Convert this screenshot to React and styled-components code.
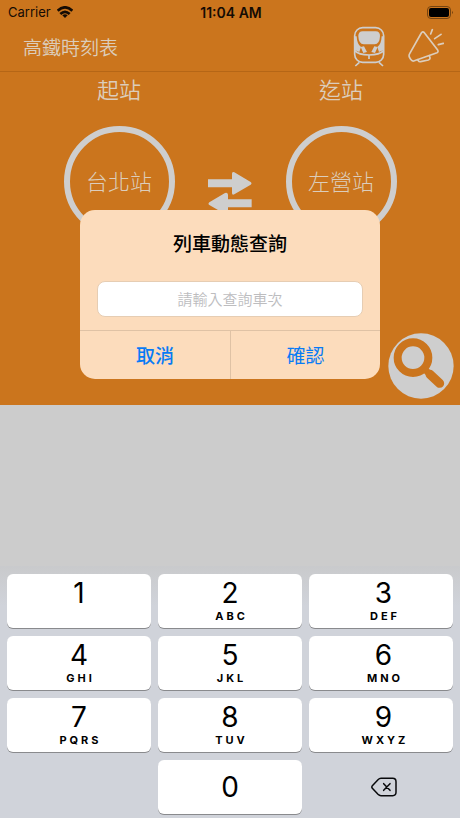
import React, { useState } from "react";
import styled, { createGlobalStyle } from "styled-components";

const ORANGE = "#cb751d";
const SILVER = "#cecece";

const GlobalStyle = createGlobalStyle`
  * { box-sizing: border-box; }
  body {
    margin: 0;
    background: #cccccc;
    font-family: Inter, "Noto Sans CJK TC", sans-serif;
  }
  button, input { font: inherit; color: inherit; }
  button { border: 0; padding: 0; background: none; cursor: pointer; }
  h1, h2 { margin: 0; }
`;

const Screen = styled.div`
  position: relative;
  min-height: 100vh;
  display: flex;
  flex-direction: column;
`;

const StatusBar = styled.div`
  display: grid;
  grid-template-columns: 1fr auto 1fr;
  align-items: center;
  height: 24px;
  padding: 0 6px 0 8px;
  background: ${ORANGE};
  color: #150c04;
  font-size: 13px;
`;

const Carrier = styled.span`
  display: flex;
  align-items: center;
  gap: 6px;
`;

const Clock = styled.time`
  font-size: 14px;
  font-weight: 600;
`;

const BatteryIcon = styled.svg`
  justify-self: end;
`;

const NavBar = styled.header`
  display: flex;
  align-items: center;
  justify-content: space-between;
  height: 48px;
  padding: 0 16px 0 23px;
  background: ${ORANGE};
  border-bottom: 1px solid #b56616;
  color: #dccdbb;
`;

const NavTitle = styled.h1`
  padding-top: 2px;
  font-size: 19px;
  line-height: 28px;
  font-weight: 350;
`;

const NavActions = styled.div`
  display: flex;
  align-items: center;
  gap: 22px;
  padding-bottom: 4px;
`;

const IconButton = styled.button`
  display: flex;
`;

const Journey = styled.main`
  display: flex;
  flex-direction: column;
  justify-content: space-between;
  height: 333px;
  background: ${ORANGE};
  color: #dccdbb;
`;

const Stations = styled.div`
  display: grid;
  grid-template-columns: 1fr 44px 1fr;
  padding: 0 30px;
`;

const Stop = styled.section`
  display: flex;
  flex-direction: column;
  align-items: center;
  gap: 18px;
`;

const StopLabel = styled.h2`
  font-size: 22px;
  line-height: 36px;
  font-weight: 350;
`;

const StationButton = styled.button`
  width: 111px;
  height: 111px;
  padding-bottom: 4px;
  border: 6px solid ${SILVER};
  border-radius: 50%;
  font-size: 22px;
  font-weight: 300;
`;

const SwapButton = styled.button`
  align-self: end;
  display: flex;
  margin-bottom: 22px;
`;

const SearchButton = styled.button`
  align-self: flex-end;
  display: flex;
  margin: 0 6px 6px 0;
`;

const Results = styled.div`
  flex: 1;
`;

const Keypad = styled.div`
  display: grid;
  grid-template-columns: repeat(3, 1fr);
  gap: 8px 7px;
  padding: 8px 7px 4px;
  background: linear-gradient(#c9cacc, #d0d3da 40px);
`;

const Key = styled.button`
  display: flex;
  flex-direction: column;
  align-items: center;
  justify-content: ${(p) => (p.$centered ? "center" : "flex-start")};
  height: 54px;
  padding-top: ${(p) => (p.$centered ? 0 : 2)}px;
  border-radius: 6px;
  background: #ffffff;
  box-shadow: 0 1px 0 #898a8d;
  color: #000000;
  &:nth-child(3n) { padding-left: 5px; }
`;

const Digit = styled.span`
  font-size: 28px;
  line-height: 34px;
  font-weight: 400;
`;

const Letters = styled.span`
  padding-left: 3px;
  font-size: 11px;
  line-height: 12px;
  font-weight: 700;
  letter-spacing: 3px;
`;

const ZeroKey = styled(Key)`
  grid-column: 2;
`;

const DeleteKey = styled.button`
  grid-column: 3;
  display: flex;
  align-items: center;
  justify-content: center;
  padding-left: 5px;
`;

const Overlay = styled.div`
  position: absolute;
  inset: 0;
  display: flex;
  align-items: flex-start;
  justify-content: center;
  padding-top: 210px;
  pointer-events: none;
`;

const Dialog = styled.form`
  width: 300px;
  overflow: hidden;
  border-radius: 15px;
  background: #fcdcbc;
  color: #000000;
  pointer-events: auto;
`;

const DialogBody = styled.div`
  display: flex;
  flex-direction: column;
  gap: 22px;
  padding: 21px 17px 13px;
`;

const DialogTitle = styled.h2`
  font-size: 19px;
  line-height: 28px;
  font-weight: 500;
  text-align: center;
`;

const TrainInput = styled.input`
  width: 100%;
  height: 36px;
  border: 1px solid #e6cdb3;
  border-radius: 8px;
  background: #ffffff;
  font-size: 15px;
  font-weight: 350;
  text-align: center;
  outline: none;
  &::placeholder { color: #bdbdbf; opacity: 1; }
`;

const DialogActions = styled.div`
  display: grid;
  grid-template-columns: 1fr 1fr;
  border-top: 1px solid #dfc2a5;
`;

const DialogButton = styled.button`
  height: 48px;
  padding-bottom: 2px;
  color: #087bf5;
  font-size: 19px;
  font-weight: ${(p) => (p.$strong ? 500 : 400)};
  & + & { border-left: 1px solid #dfc2a5; }
`;

const WifiIcon = () => (
  <svg width="16" height="12" viewBox="0 0 48 36" aria-hidden="true">
    <g fill="none" stroke="#150c04" strokeWidth="8">
      <path d="M2 14Q24 -6 46 14" />
      <path d="M10 24Q24 11 38 24" />
    </g>
    <path d="M16 28Q24 21 32 28L24 36Z" fill="#150c04" />
  </svg>
);

const TrainIcon = () => (
  <svg width="34" height="42" viewBox="0 0 102 126" aria-hidden="true">
    <rect x="8" y="8" width="87" height="104" rx="24" fill={ORANGE} stroke={SILVER} strokeWidth="5" />
    <path d="M8 34H14Q15 58 27 66L22 81L8 75ZM95 34H89Q88 58 76 66L81 81L95 75Z" fill={SILVER} />
    <path d="M32 19H71Q84 19 84 33Q83 57 68 58H35Q20 57 19 33Q19 19 32 19Z" fill={SILVER} />
    <path d="M26 66L36 64L45 81L34 84ZM77 66L67 64L58 81L69 84Z" fill={SILVER} />
    <path d="M8 77Q20 90 51 90Q83 90 95 77M51 92V102M22 112L10 123M81 112L93 123" fill="none" stroke={SILVER} strokeWidth="5" />
  </svg>
);

const MegaphoneIcon = () => (
  <svg width="36" height="36" viewBox="0 0 108 108" fill="none" stroke="#dccdbb" strokeWidth="5" strokeLinecap="round" strokeLinejoin="round" aria-hidden="true">
    <path d="M40 15Q44 9 49 14L89 66Q92 72 87 74L17 99Q12 100 8 94L4 87Q2 82 5 77Z" />
    <path d="M29 95L31 98Q33 102 38 101L61 96Q67 94 66 89L64 83M68 18L73 5M80 32L99 19M91 50L106 46" />
  </svg>
);

const SwapIcon = () => (
  <svg width="44" height="44" viewBox="0 0 132 132" aria-hidden="true">
    <path d="M0 25H72V8Q72 1 79 4L128 33Q133 37 128 41L79 70Q72 73 72 66V49H0Z" fill={SILVER} />
    <path d="M131 85H60V71Q59 63 51 66L4 94Q-1 98 4 102L52 130Q60 133 60 125V109H131Z" fill={SILVER} />
  </svg>
);

const MagnifierIcon = () => (
  <svg width="66" height="66" viewBox="0 0 198 198" aria-hidden="true">
    <circle cx="99" cy="99" r="98" fill={SILVER} />
    <circle cx="75" cy="74" r="46" fill="none" stroke={ORANGE} strokeWidth="24" />
    <path d="M107 106L130 128" stroke={ORANGE} strokeWidth="20" />
    <path d="M126 124L155 151" stroke={ORANGE} strokeWidth="27" strokeLinecap="round" />
  </svg>
);

const DeleteIcon = () => (
  <svg width="26" height="20" viewBox="0 0 78 60" fill="none" stroke="#08090b" strokeWidth="4.5" strokeLinecap="round" strokeLinejoin="round" aria-hidden="true">
    <path d="M30 4H65Q75 4 75 14V46Q75 56 65 56H30Q25 56 21 52L4 34Q1 30 4 26L21 8Q25 4 30 4Z" />
    <path d="M38 20L57 40M57 20L38 40" />
  </svg>
);

const KEYS = [
  ["1", ""], ["2", "ABC"], ["3", "DEF"],
  ["4", "GHI"], ["5", "JKL"], ["6", "MNO"],
  ["7", "PQRS"], ["8", "TUV"], ["9", "WXYZ"],
];

export default function App() {
  const [train, setTrain] = useState("");
  const press = (digit) => setTrain((value) => value + digit);

  return (
    <>
      <GlobalStyle />
      <Screen lang="zh-Hant">
        <StatusBar>
          <Carrier>Carrier <WifiIcon /></Carrier>
          <Clock>11:04 AM</Clock>
          <BatteryIcon width="27" height="13" viewBox="0 0 27 13" aria-hidden="true">
            <rect x="0.5" y="0.5" width="23" height="12" rx="3.5" fill="none" stroke="#754411" />
            <rect x="2" y="2" width="20" height="9" rx="2" fill="#000000" />
            <path d="M25 5Q27 6.500 25 8Z" fill="#754411" />
          </BatteryIcon>
        </StatusBar>
        <NavBar>
          <NavTitle>高鐵時刻表</NavTitle>
          <NavActions>
            <IconButton type="button" aria-label="列車動態"><TrainIcon /></IconButton>
            <IconButton type="button" aria-label="公告"><MegaphoneIcon /></IconButton>
          </NavActions>
        </NavBar>
        <Journey>
          <Stations>
            <Stop>
              <StopLabel>起站</StopLabel>
              <StationButton type="button">台北站</StationButton>
            </Stop>
            <SwapButton type="button" aria-label="交換"><SwapIcon /></SwapButton>
            <Stop>
              <StopLabel>迄站</StopLabel>
              <StationButton type="button">左營站</StationButton>
            </Stop>
          </Stations>
          <SearchButton type="button" aria-label="查詢"><MagnifierIcon /></SearchButton>
        </Journey>
        <Results />
        <Keypad>
          {KEYS.map(([digit, letters]) => (
            <Key key={digit} type="button" onClick={() => press(digit)}>
              <Digit>{digit}</Digit>
              {letters && <Letters>{letters}</Letters>}
            </Key>
          ))}
          <ZeroKey type="button" $centered onClick={() => press("0")}>
            <Digit>0</Digit>
          </ZeroKey>
          <DeleteKey type="button" aria-label="刪除" onClick={() => setTrain((value) => value.slice(0, -1))}>
            <DeleteIcon />
          </DeleteKey>
        </Keypad>
        <Overlay>
          <Dialog role="dialog" aria-labelledby="dialog-title" onSubmit={(e) => e.preventDefault()}>
            <DialogBody>
              <DialogTitle id="dialog-title">列車動態查詢</DialogTitle>
              <TrainInput
                aria-labelledby="dialog-title"
                inputMode="numeric"
                placeholder="請輸入查詢車次"
                value={train}
                onChange={(e) => setTrain(e.target.value)}
              />
            </DialogBody>
            <DialogActions>
              <DialogButton type="button" $strong>取消</DialogButton>
              <DialogButton type="submit">確認</DialogButton>
            </DialogActions>
          </Dialog>
        </Overlay>
      </Screen>
    </>
  );
}
